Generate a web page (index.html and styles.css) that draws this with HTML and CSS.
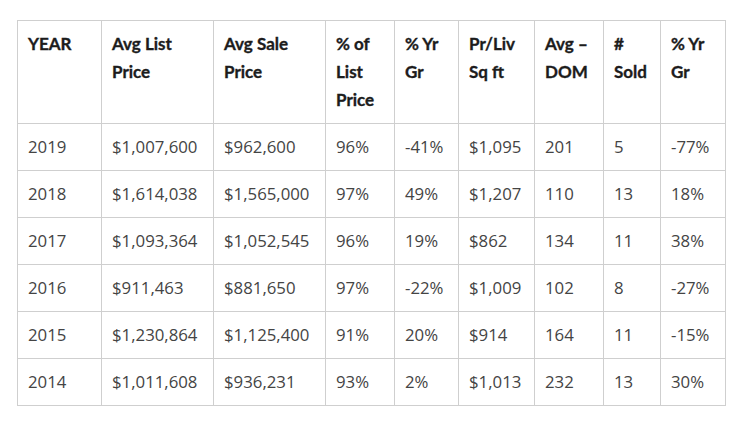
FILE: index.html
```html
<!DOCTYPE html>
<html lang="en">
<head>
<meta charset="utf-8">
<title>Sales history</title>
<link rel="stylesheet" href="styles.css">
</head>
<body>
<div class="wrap">
<table class="stats">
  <colgroup>
    <col class="c1"><col class="c2"><col class="c3"><col class="c4"><col class="c5"><col class="c6"><col class="c7"><col class="c8"><col class="c9">
  </colgroup>
  <thead>
    <tr>
      <th>YEAR</th>
      <th>Avg List Price</th>
      <th>Avg Sale Price</th>
      <th>% of List Price</th>
      <th>% Yr Gr</th>
      <th>Pr/Liv Sq ft</th>
      <th>Avg – DOM</th>
      <th># Sold</th>
      <th>% Yr Gr</th>
    </tr>
  </thead>
  <tbody>
    <tr><td>2019</td><td>$1,007,600</td><td>$962,600</td><td>96%</td><td>-41%</td><td>$1,095</td><td>201</td><td>5</td><td>-77%</td></tr>
    <tr><td>2018</td><td>$1,614,038</td><td>$1,565,000</td><td>97%</td><td>49%</td><td>$1,207</td><td>110</td><td>13</td><td>18%</td></tr>
    <tr><td>2017</td><td>$1,093,364</td><td>$1,052,545</td><td>96%</td><td>19%</td><td>$862</td><td>134</td><td>11</td><td>38%</td></tr>
    <tr><td>2016</td><td>$911,463</td><td>$881,650</td><td>97%</td><td>-22%</td><td>$1,009</td><td>102</td><td>8</td><td>-27%</td></tr>
    <tr><td>2015</td><td>$1,230,864</td><td>$1,125,400</td><td>91%</td><td>20%</td><td>$914</td><td>164</td><td>11</td><td>-15%</td></tr>
    <tr><td>2014</td><td>$1,011,608</td><td>$936,231</td><td>93%</td><td>2%</td><td>$1,013</td><td>232</td><td>13</td><td>30%</td></tr>
  </tbody>
</table>
</div>
</body>
</html>
```
FILE: styles.css
```css
html, body {
  margin: 0;
  padding: 0;
  background: #fff;
}
.wrap {
  padding: 20px 0 0 17px;
}
.stats {
  border-collapse: collapse;
  table-layout: fixed;
  width: 708px;
}
.c1 { width: 84px; }
.c2 { width: 112px; }
.c3 { width: 112px; }
.c4 { width: 69px; }
.c5 { width: 64px; }
.c6 { width: 76px; }
.c7 { width: 69px; }
.c8 { width: 57px; }
.c9 { width: 65px; }
.stats th,
.stats td {
  border: 1px solid #cfcfcf;
  padding: 9px 4px 9px 10px;
  text-align: left;
  vertical-align: top;
  line-height: 28px;
  height: 28px;
}
.stats th {
  font-family: "Lato", "Liberation Sans", sans-serif;
  font-weight: 700;
  font-size: 17px;
  color: #1c1c1c;
  -webkit-text-stroke: 0.35px #1c1c1c;
}
.stats td {
  font-family: "Open Sans", "Liberation Sans", sans-serif;
  font-weight: 400;
  font-size: 16.8px;
  color: #444;
  white-space: nowrap;
}
```
